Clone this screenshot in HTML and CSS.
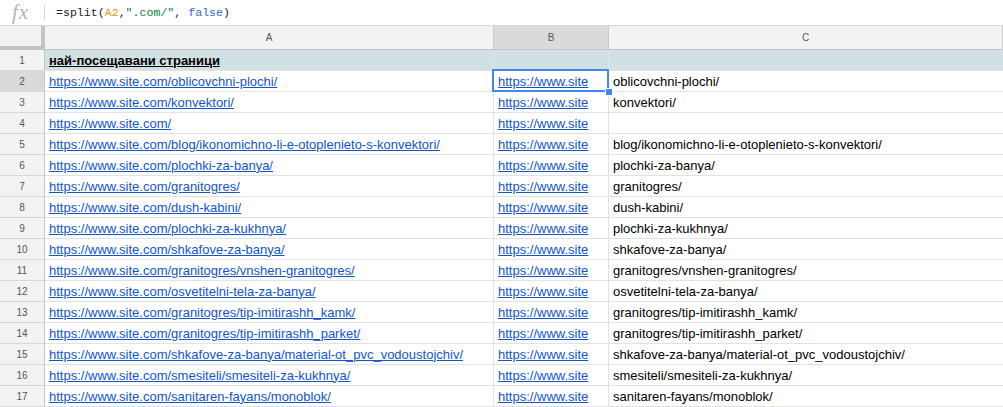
FILE: index.html
```html
<!DOCTYPE html>
<html lang="en">

<head>
  <meta charset="UTF-8">
  <title>Sheet</title>
  <link rel="stylesheet" href="styles.css">
</head>

<body>
  <div class="formula-bar">
    <span class="fx">fx</span>
    <span class="fx-sep"></span>
    <span class="formula">=split(<span class="f-ref">A2</span>,<span class="f-str">".com/"</span>, <span class="f-bool">false</span>)</span>
  </div>

  <div class="sheet">
    <div class="corner"></div>
    <div class="col-head">A</div>
    <div class="col-head active">B</div>
    <div class="col-head">C</div>

    <div class="row-head">1</div>
    <div class="cell title-row"><span class="title">най-посещавани страници</span></div>
    <div class="cell title-row"></div>
    <div class="cell title-row"></div>

    <div class="row-head active">2</div>
    <div class="cell"><a href="#">https://www.site.com/oblicovchni-plochi/</a></div>
    <div class="cell selected"><a href="#">https://www.site</a></div>
    <div class="cell">oblicovchni-plochi/</div>

    <div class="row-head">3</div>
    <div class="cell"><a href="#">https://www.site.com/konvektori/</a></div>
    <div class="cell"><a href="#">https://www.site</a></div>
    <div class="cell">konvektori/</div>

    <div class="row-head">4</div>
    <div class="cell"><a href="#">https://www.site.com/</a></div>
    <div class="cell"><a href="#">https://www.site</a></div>
    <div class="cell"></div>

    <div class="row-head">5</div>
    <div class="cell"><a href="#">https://www.site.com/blog/ikonomichno-li-e-otoplenieto-s-konvektori/</a></div>
    <div class="cell"><a href="#">https://www.site</a></div>
    <div class="cell">blog/ikonomichno-li-e-otoplenieto-s-konvektori/</div>

    <div class="row-head">6</div>
    <div class="cell"><a href="#">https://www.site.com/plochki-za-banya/</a></div>
    <div class="cell"><a href="#">https://www.site</a></div>
    <div class="cell">plochki-za-banya/</div>

    <div class="row-head">7</div>
    <div class="cell"><a href="#">https://www.site.com/granitogres/</a></div>
    <div class="cell"><a href="#">https://www.site</a></div>
    <div class="cell">granitogres/</div>

    <div class="row-head">8</div>
    <div class="cell"><a href="#">https://www.site.com/dush-kabini/</a></div>
    <div class="cell"><a href="#">https://www.site</a></div>
    <div class="cell">dush-kabini/</div>

    <div class="row-head">9</div>
    <div class="cell"><a href="#">https://www.site.com/plochki-za-kukhnya/</a></div>
    <div class="cell"><a href="#">https://www.site</a></div>
    <div class="cell">plochki-za-kukhnya/</div>

    <div class="row-head">10</div>
    <div class="cell"><a href="#">https://www.site.com/shkafove-za-banya/</a></div>
    <div class="cell"><a href="#">https://www.site</a></div>
    <div class="cell">shkafove-za-banya/</div>

    <div class="row-head">11</div>
    <div class="cell"><a href="#">https://www.site.com/granitogres/vnshen-granitogres/</a></div>
    <div class="cell"><a href="#">https://www.site</a></div>
    <div class="cell">granitogres/vnshen-granitogres/</div>

    <div class="row-head">12</div>
    <div class="cell"><a href="#">https://www.site.com/osvetitelni-tela-za-banya/</a></div>
    <div class="cell"><a href="#">https://www.site</a></div>
    <div class="cell">osvetitelni-tela-za-banya/</div>

    <div class="row-head">13</div>
    <div class="cell"><a href="#">https://www.site.com/granitogres/tip-imitirashh_kamk/</a></div>
    <div class="cell"><a href="#">https://www.site</a></div>
    <div class="cell">granitogres/tip-imitirashh_kamk/</div>

    <div class="row-head">14</div>
    <div class="cell"><a href="#">https://www.site.com/granitogres/tip-imitirashh_parket/</a></div>
    <div class="cell"><a href="#">https://www.site</a></div>
    <div class="cell">granitogres/tip-imitirashh_parket/</div>

    <div class="row-head">15</div>
    <div class="cell"><a href="#">https://www.site.com/shkafove-za-banya/material-ot_pvc_vodoustojchiv/</a></div>
    <div class="cell"><a href="#">https://www.site</a></div>
    <div class="cell">shkafove-za-banya/material-ot_pvc_vodoustojchiv/</div>

    <div class="row-head">16</div>
    <div class="cell"><a href="#">https://www.site.com/smesiteli/smesiteli-za-kukhnya/</a></div>
    <div class="cell"><a href="#">https://www.site</a></div>
    <div class="cell">smesiteli/smesiteli-za-kukhnya/</div>

    <div class="row-head">17</div>
    <div class="cell"><a href="#">https://www.site.com/sanitaren-fayans/monoblok/</a></div>
    <div class="cell"><a href="#">https://www.site</a></div>
    <div class="cell">sanitaren-fayans/monoblok/</div>
  </div>
</body>

</html>
```

FILE: styles.css
```css
body {
  margin: 0;
  padding: 0;
  background-color: #ffffff;
  font-family: "Liberation Sans", Arial, sans-serif;
  overflow: hidden;
}

/* formula bar */
.formula-bar {
  display: flex;
  align-items: center;
  height: 25px;
  border-bottom: 1px solid #d9d9d9;
  color: #333;
}

.fx {
  width: 44px;
  padding-left: 12px;
  box-sizing: border-box;
  font-family: "Liberation Serif", serif;
  font-style: italic;
  font-size: 21px;
  color: #b3b3b3;
  line-height: 25px;
  letter-spacing: 1px;
}

.fx-sep {
  width: 1px;
  height: 15px;
  background-color: #d4d4d4;
}

.formula {
  padding-left: 11px;
  font-family: "Liberation Mono", monospace;
  font-size: 11.6px;
  color: #222;
}

.f-ref {
  color: #f09300;
}

.f-str {
  color: #0b8043;
}

.f-bool {
  color: #3367d6;
}

/* grid */
.sheet {
  display: grid;
  grid-template-columns: 45px 449px 115px 1fr;
  grid-template-rows: 24px 21px;
  grid-auto-rows: 21px;
}

.corner {
  background-color: #f3f3f3;
  box-shadow: inset -4px -4px 0 #c4c4c4;
}

.col-head {
  display: flex;
  align-items: center;
  justify-content: center;
  background-color: #f3f3f3;
  border-right: 1px solid #cccccc;
  border-bottom: 1px solid #c4c4c4;
  font-size: 10px;
  color: #555;
}

.row-head {
  display: flex;
  align-items: center;
  justify-content: center;
  background-color: #f3f3f3;
  border-right: 1px solid #c4c4c4;
  border-bottom: 1px solid #d6d6d6;
  font-size: 10px;
  color: #555;
}

.col-head.active,
.row-head.active {
  background-color: #dadada;
}

.cell {
  display: flex;
  align-items: center;
  padding-left: 4px;
  border-right: 1px solid #e2e2e2;
  border-bottom: 1px solid #e2e2e2;
  font-size: 13px;
  color: #000;
  white-space: nowrap;
  overflow: hidden;
}

.cell:nth-child(4n) {
  border-right: none;
}

.cell a {
  color: #1155cc;
  text-decoration: underline;
}

.title-row {
  background-color: #d0e0e3;
}

.title {
  font-weight: bold;
  text-decoration: underline;
}

.cell.selected {
  position: relative;
  overflow: visible;
}

.cell.selected::before {
  content: "";
  position: absolute;
  left: -2px;
  top: -2px;
  right: -1px;
  bottom: -1px;
  border: 2px solid #4285f4;
}

.cell.selected::after {
  content: "";
  position: absolute;
  right: -5px;
  bottom: -5px;
  width: 6px;
  height: 6px;
  background-color: #4285f4;
  border: 1px solid #ffffff;
  z-index: 2;
}
```
